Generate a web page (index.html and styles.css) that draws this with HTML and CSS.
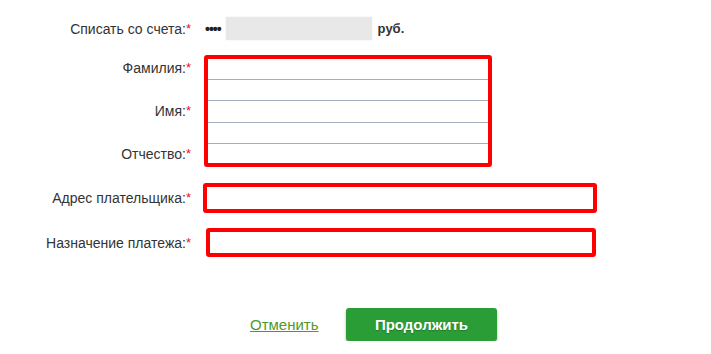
FILE: index.html
```html
<!DOCTYPE html>
<html lang="ru">
<head>
    <meta charset="UTF-8">
    <meta name="viewport" content="width=device-width, initial-scale=1.0">
    <title>Платёж</title>
    <link rel="stylesheet" href="styles.css">
</head>
<body>
    <form class="pay-form">
        <!-- счет списания -->
        <div class="row row-account">
            <label class="label">Списать со счета:<span class="req">*</span></label>
            <div class="account">
                <span class="dots">••••</span>
                <span class="blur"></span>
                <b class="cur">руб.</b>
            </div>
        </div>

        <!-- ФИО -->
        <div class="row row-fio">
            <div class="fio-labels">
                <label class="label">Фамилия:<span class="req">*</span></label>
                <label class="label">Имя:<span class="req">*</span></label>
                <label class="label">Отчество:<span class="req">*</span></label>
            </div>
            <div class="mark mark-fio">
                <input type="text" class="line-input">
                <input type="text" class="line-input">
                <input type="text" class="line-input">
            </div>
        </div>

        <div class="row row-addr">
            <label class="label">Адрес плательщика:<span class="req">*</span></label>
            <div class="mark mark-addr"></div>
        </div>

        <div class="row row-purpose">
            <label class="label">Назначение платежа:<span class="req">*</span></label>
            <div class="mark mark-purpose"></div>
        </div>

        <div class="actions">
            <a href="javascript:;" class="cancel">Отменить</a>
            <a href="javascript:;" class="btn-next">Продолжить</a>
        </div>
    </form>
</body>
</html>
```

FILE: styles.css
```css
*{margin:0;padding:0;box-sizing:border-box;}

body{
    background:#fff;
    font-family:"Liberation Sans", Arial, sans-serif;
    font-size:14px;
    color:#333;
}

.pay-form{
    width:711px;
    padding-top:17px;
}

.row{
    display:flex;
    align-items:center;
}
.label{
    display:block;
    width:191px;
    text-align:right;
    line-height:20px;
    white-space:nowrap;
}
.req{color:#e8131f;vertical-align:top;font-size:13px;}

/* счет */
.row-account{height:23px;}
.account{
    display:flex;
    align-items:center;
    margin-left:14px;
}
.dots{font-size:14px;font-weight:bold;letter-spacing:-1px;color:#222;}
.blur{
    display:block;
    width:146px;height:23px;
    margin-left:5px;
    background:#e8e8e8;
    box-shadow:0 0 2px #ececec;
}
.cur{margin-left:6px;color:#333;font-size:13px;}

/* ФИО */
.row-fio{
    align-items:flex-start;
    margin-top:15px;
}
.fio-labels{padding-top:3px;}
.fio-labels .label{margin-bottom:23px;}
.fio-labels .label:last-child{margin-bottom:0;}

.mark{
    border:4px solid #ff0000;
    border-radius:3px;
}
.mark-fio{
    width:288px;height:112px;
    margin-left:13px;
    overflow:hidden;
    display:flex;
    flex-direction:column;
    gap:20px;
}
.line-input{
    display:block;
    width:100%;
    height:23px;
    border:0;
    border-top:1px solid #a2aeb9;
    border-bottom:1px solid #a2aeb9;
    background:transparent;
    outline:none;
    flex:none;
}
.line-input:first-child{margin-top:-2px;}

.row-addr{margin-top:16px;}
.mark-addr{width:394px;height:30px;margin-left:12px;}

.row-purpose{margin-top:15px;}
.mark-purpose{width:390px;height:29px;margin-left:15px;}

/* кнопки */
.actions{
    display:flex;
    align-items:center;
    padding-left:250px;
    margin-top:51px;
}
.cancel{
    width:70px;
    font-size:15px;
    color:#4f992b;
    text-decoration:underline;
}
.btn-next{
    display:block;
    width:151px;height:33px;
    margin-left:26px;
    line-height:33px;
    text-align:center;
    background:#2b9d37;
    color:#fff;
    font-size:15px;
    font-weight:bold;
    text-decoration:none;
    border-radius:3px;
    box-shadow:0 2px 3px rgba(0,0,0,.3);
    text-shadow:0 1px 1px rgba(0,0,0,.25);
}
```
